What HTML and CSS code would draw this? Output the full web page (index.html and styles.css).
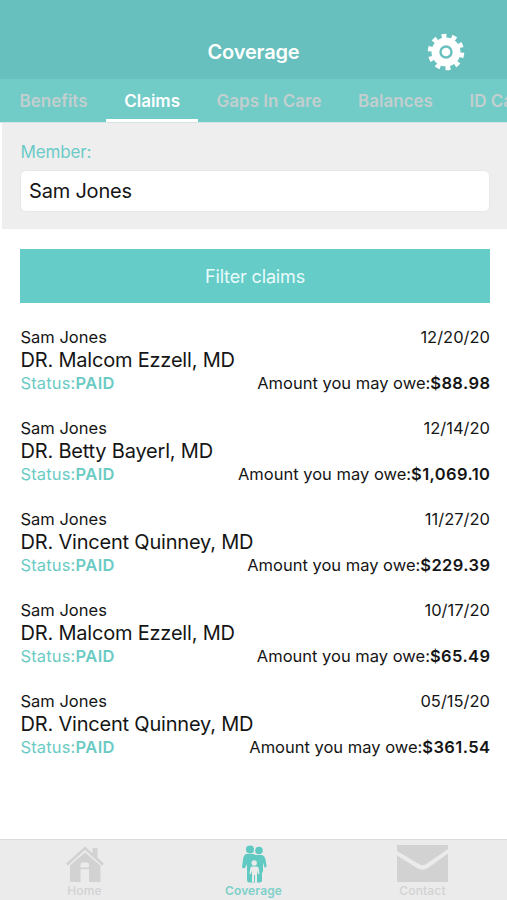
FILE: index.html
```html
<!DOCTYPE html>
<html lang="en">
<head>
<meta charset="utf-8">
<title>Coverage</title>
<link rel="stylesheet" href="styles.css">
</head>
<body>
<div class="app">
  <header class="topbar">
    <h1 class="title">Coverage</h1>
    <button class="settings" aria-label="Settings">
      <svg width="38" height="38" viewBox="0 0 38 38">
        <g fill="none" stroke="#fff">
          <circle cx="19" cy="19" r="10.6" stroke-width="7.8"/>
          <circle cx="19" cy="19" r="15.8" stroke-width="5" pathLength="200" stroke-dasharray="9.6 10.4" transform="rotate(-105.500 19 19)"/>
        </g>
        <circle cx="19" cy="19" r="4.3" fill="#fff"/>
      </svg>
    </button>
  </header>
  <nav class="tabs">
    <a class="tab"><span>Benefits</span></a>
    <a class="tab active"><span>Claims</span></a>
    <a class="tab"><span>Gaps In Care</span></a>
    <a class="tab"><span>Balances</span></a>
    <a class="tab"><span>ID Card</span></a>
  </nav>
  <section class="member">
    <label class="label">Member:</label>
    <div class="field">Sam Jones</div>
  </section>
  <main class="claims">
    <button class="filter">Filter claims</button>
    <article class="claim">
      <div class="row"><span class="patient">Sam Jones</span><span>12/20/20</span></div>
      <div class="doctor">DR. Malcom Ezzell, MD</div>
      <div class="row"><span class="status">Status:<b>PAID</b></span><span class="owe">Amount you may owe:<b>$88.98</b></span></div>
    </article>
    <article class="claim">
      <div class="row"><span class="patient">Sam Jones</span><span>12/14/20</span></div>
      <div class="doctor">DR. Betty Bayerl, MD</div>
      <div class="row"><span class="status">Status:<b>PAID</b></span><span class="owe">Amount you may owe:<b>$1,069.10</b></span></div>
    </article>
    <article class="claim">
      <div class="row"><span class="patient">Sam Jones</span><span>11/27/20</span></div>
      <div class="doctor">DR. Vincent Quinney, MD</div>
      <div class="row"><span class="status">Status:<b>PAID</b></span><span class="owe">Amount you may owe:<b>$229.39</b></span></div>
    </article>
    <article class="claim">
      <div class="row"><span class="patient">Sam Jones</span><span>10/17/20</span></div>
      <div class="doctor">DR. Malcom Ezzell, MD</div>
      <div class="row"><span class="status">Status:<b>PAID</b></span><span class="owe">Amount you may owe:<b>$65.49</b></span></div>
    </article>
    <article class="claim">
      <div class="row"><span class="patient">Sam Jones</span><span>05/15/20</span></div>
      <div class="doctor">DR. Vincent Quinney, MD</div>
      <div class="row"><span class="status">Status:<b>PAID</b></span><span class="owe">Amount you may owe:<b>$361.54</b></span></div>
    </article>
  </main>
  <footer class="bottombar">
    <a class="item">
      <svg width="40" height="38" viewBox="0 0 40 38" fill="#d2d2d2">
        <path d="M1 18.500 20 1.500l7.500 6.700V3h5v9.700l6.500 5.800-1.800 2L20 5 2.800 20.500z"/>
        <path d="M5 20.500 20 7.500l15.500 13V37H24V19.500q0-2-2-2h-4.500q-2 0-2 2V37H5zM15.500 22.500H24v1.800h-8.500z"/>
      </svg>
      <span>Home</span>
    </a>
    <a class="item current">
      <svg width="28" height="38" viewBox="0 0 28 38">
        <g fill="#5fc9c2">
          <circle cx="10" cy="4.500" r="4"/>
          <circle cx="19" cy="5.500" r="3.800"/>
          <path d="M6 9h8l1 1h7q2.500.5 3.300 3.500l1.300 7.500q0 2-2 1.500l-1.600-5v9L22 28v8q-.5 1.500-2.500 1.500H17l-1-3-1 3H9Q7 37 7 35V19l-2 4q-2.500 1-3-1l1-7Q3.500 10 6 9z"/>
        </g>
        <g fill="#ebebeb">
          <circle cx="14.200" cy="18" r="2.700"/>
          <path d="M11.500 21.500h5.500q1.500.5 1.800 2l.6 5.500-1.400.3-1-3.800v11.700h-2V30h-1v7.200h-2V25.500l-1.300 3.800-1.200-.3.800-5.500q.2-1.500 1.200-2z"/>
        </g>
      </svg>
      <span>Coverage</span>
    </a>
    <a class="item">
      <svg width="51" height="38" viewBox="0 0 51 38" fill="#d2d2d2">
        <path d="M0 0h51v4L30 18.500q-4.500 3-9 0L0 6z"/>
        <path d="M0 10.500 20 23q5.500 3.500 11 0L51 8.500V37H0z"/>
      </svg>
      <span>Contact</span>
    </a>
  </footer>
</div>
</body>
</html>
```
FILE: styles.css
```css
* { box-sizing: border-box; }
body {
  margin: 0;
  background: #fff;
  color: #151515;
  font-family: Inter, "Liberation Sans", sans-serif;
}
button { border: 0; padding: 0; font: inherit; background: none; }
.app {
  width: 507px;
  height: 900px;
  display: flex;
  flex-direction: column;
  overflow: hidden;
}
.topbar {
  height: 79px;
  flex: none;
  display: grid;
  grid-template-columns: 1fr auto 1fr;
  align-items: center;
  padding-top: 25px;
  background: #67c0bd;
  color: #fff;
}
.title {
  grid-column: 2;
  margin: 0;
  font-size: 20px;
  line-height: 24px;
  font-weight: 600;
  letter-spacing: -0.15px;
}
.settings {
  width: 38px;
  height: 38px;
  justify-self: end;
  margin-right: 42px;
}
.settings svg { display: block; }
.tabs {
  height: 44px;
  flex: none;
  display: flex;
  overflow: hidden;
  border-bottom: 1px solid #d5e5e4;
  background: #71cbc7;
  color: #c3cfcf;
  font-size: 17px;
  font-weight: 600;
  line-height: 44px;
  white-space: nowrap;
}
.tab { flex: none; padding: 0 18.3px; }
.tab:first-child { padding-left: 19.5px; }
.tab.active {
  color: #fff;
  box-shadow: inset 0 -3px #fff;
}
.member {
  height: 106px;
  flex: none;
  margin-left: 2px;
  padding: 19px 17px 0 18px;
  background: #eee;
}
.label {
  display: block;
  height: 20px;
  padding-left: 0.5px;
  color: #6bcbc8;
  font-size: 17px;
  line-height: 20px;
  letter-spacing: -0.15px;
}
.field {
  height: 42px;
  margin-top: 8px;
  padding: 0 8px;
  border: 1px solid #e9e9e9;
  border-radius: 6px;
  background: #fff;
  font-size: 20px;
  line-height: 40px;
  letter-spacing: -0.2px;
}
.claims { flex: 1; padding: 20px 17px 0 20px; }
.filter {
  display: block;
  width: 470px;
  height: 54px;
  margin-bottom: 23.4px;
  background: #65ccc8;
  color: #e9fbfa;
  font-size: 18px;
  letter-spacing: -0.15px;
}
.claim {
  height: 90.8px;
  padding-left: 0.5px;
  font-size: 16.5px;
  line-height: 22px;
  white-space: nowrap;
}
.row { display: flex; justify-content: space-between; }
.doctor {
  font-size: 20px;
  line-height: 24px;
  letter-spacing: -0.2px;
}
.status { color: #6bcbc4; letter-spacing: 0.15px; }
b { font-weight: 600; letter-spacing: 0.4px; }
.owe b { margin-right: -0.4px; }
.bottombar {
  height: 61px;
  flex: none;
  display: grid;
  grid-template-columns: repeat(3, 1fr);
  border-top: 1px solid #dcdcdc;
  background: #ebebeb;
}
.item {
  display: flex;
  flex-direction: column;
  align-items: center;
  padding-top: 5px;
  color: #d2d2d2;
  font-size: 12px;
  font-weight: 500;
  line-height: 15px;
  letter-spacing: 0.15px;
}
.item.current { color: #80d0ca; font-weight: 600; }
```
